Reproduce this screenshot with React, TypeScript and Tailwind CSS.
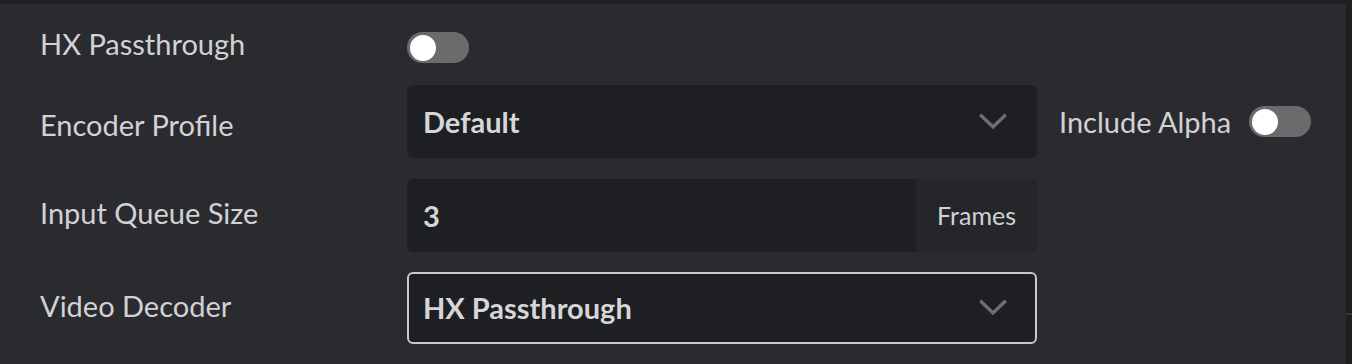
import React from 'react';

const font = { fontFamily: 'Lato, "Noto Sans", sans-serif' };

const Toggle: React.FC = () => (
  <div className="flex items-center w-[62px] h-[31px] rounded-full bg-[#6b6b6e] px-[3px]">
    <div className="w-[26px] h-[26px] rounded-full bg-white"></div>
  </div>
);

const Chevron: React.FC = () => (
  <svg width="28" height="18" viewBox="0 0 28 18" fill="none" className="text-[#6f6f72]">
    <path d="M2.5 3 L14 14 L25.5 3" stroke="currentColor" strokeWidth="3.4" strokeLinecap="square" />
  </svg>
);

const Row: React.FC<{ label: string; shift: string; children: React.ReactNode }> = ({ label, shift, children }) => (
  <div className="flex items-center">
    <div className={`w-[367px] text-[29px] text-[#d2d2d4] leading-none ${shift}`}>{label}</div>
    {children}
  </div>
);

const App: React.FC = () => {
  return (
    <div className="w-[1352px] h-[364px] bg-[#1e1f22] flex" style={font}>
      <div className="flex-1 mt-[4px] bg-[#2a2b2f] pl-[40px] pt-[28px] flex flex-col">
        {/* HX Passthrough */}
        <Row label="HX Passthrough" shift="-translate-y-[4px]">
          <Toggle />
        </Row>

        {/* Encoder Profile */}
        <div className="mt-[22px]">
          <Row label="Encoder Profile" shift="translate-y-[3px]">
            <div className="w-[630px] h-[73px] rounded-[6px] bg-[#1e1f22] flex items-center justify-between pl-[16px] pr-[30px]">
              <span className="text-[29px] font-bold text-[#d6d6d8]">Default</span>
              <Chevron />
            </div>
            <div className="flex items-center ml-[22px]">
              <span className="text-[29px] text-[#d2d2d4] mr-[18px]">Include Alpha</span>
              <Toggle />
            </div>
          </Row>
        </div>

        {/* Input Queue Size */}
        <div className="mt-[21px]">
          <Row label="Input Queue Size" shift="-translate-y-[3px]">
            <div className="w-[630px] h-[73px] rounded-[6px] bg-[#1e1f22] flex overflow-hidden">
              <div className="flex-1 flex items-center pl-[16px]">
                <span className="text-[29px] font-bold text-[#d6d6d8]">3</span>
              </div>
              <div className="w-[121px] bg-[#252629] flex items-center justify-center">
                <span className="text-[25px] text-[#d2d2d4]">Frames</span>
              </div>
            </div>
          </Row>
        </div>

        {/* Video Decoder */}
        <div className="mt-[20px]">
          <Row label="Video Decoder" shift="-translate-y-[3px]">
            <div className="w-[630px] h-[72px] rounded-[6px] bg-[#1e1f22] border-2 border-[#c9c9cb] flex items-center justify-between pl-[14px] pr-[28px]">
              <span className="text-[29px] font-bold text-[#d6d6d8]">HX Passthrough</span>
              <Chevron />
            </div>
          </Row>
        </div>
      </div>
      <div className="w-[6px] flex flex-col">
        <div className="h-[313px] bg-[#1e1f22]"></div>
        <div className="h-[2px] bg-[#333438]"></div>
        <div className="flex-1 bg-[#1e1f22]"></div>
      </div>
    </div>
  );
};

export default App;
